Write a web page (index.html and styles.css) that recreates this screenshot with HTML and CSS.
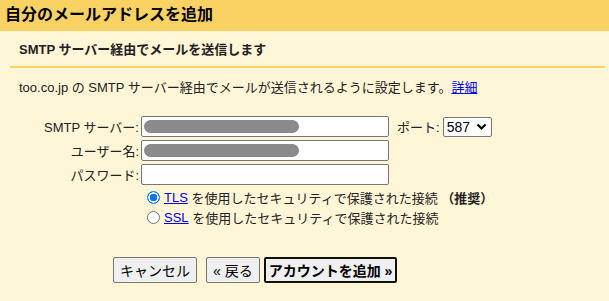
FILE: index.html
```html
<!DOCTYPE html>
<html lang="ja">
<head>
    <meta charset="UTF-8">
    <title>自分のメールアドレスを追加</title>
    <link rel="stylesheet" href="styles.css">
</head>
<body>
    <div class="title">自分のメールアドレスを追加</div>
    <div class="content">
        <div class="subhead">SMTP サーバー経由でメールを送信します</div>
        <p class="desc">too.co.jp の SMTP サーバー経由でメールが送信されるように設定します。<a href="#">詳細</a></p>

        <div class="form">
            <label class="lbl">SMTP サーバー:</label>
            <div class="row">
                <div class="field"><span class="redact"></span></div>
                <span class="port">ポート:</span>
                <div class="select">587 <svg width="11" height="8" viewBox="0 0 11 8"><path d="M1.5 1.5 L5.5 5.5 L9.5 1.5" fill="none" stroke="#000" stroke-width="2.2"/></svg></div>
            </div>
            <label class="lbl">ユーザー名:</label>
            <div class="row"><div class="field"><span class="redact"></span></div></div>
            <label class="lbl">パスワード:</label>
            <div class="row"><div class="field"></div></div>
        </div>

        <div class="radios">
            <div class="radio-row"><span class="radio checked"></span><a href="#">TLS</a> を使用したセキュリティで保護された接続 <b>（推奨）</b></div>
            <div class="radio-row"><span class="radio"></span><a href="#">SSL</a> を使用したセキュリティで保護された接続</div>
        </div>

        <div class="buttons">
            <button class="btn">キャンセル</button>
            <button class="btn back">« 戻る</button>
            <button class="btn primary">アカウントを追加 »</button>
        </div>
    </div>
</body>
</html>
```

FILE: styles.css
```css
body {
    margin: 0;
    background-color: #fff5d7;
    color: #222;
    font-family: "Liberation Sans", Arial, "Noto Sans CJK JP", sans-serif;
    font-size: 13px;
}
.title {
    background-color: #f9d263;
    height: 31px;
    line-height: 30px;
    padding-left: 5px;
    font-size: 16px;
    font-weight: bold;
    color: #000;
}
.content {
    padding: 0 4px 0 10px;
}
.subhead {
    font-weight: bold;
    padding: 8px 0 0 9px;
    height: 27px;
    border-bottom: 2px solid #f9d263;
}
.desc {
    margin: 11px 0 0 9px;
    line-height: 17px;
}
a {
    color: #0000ee;
}
.form {
    display: grid;
    grid-template-columns: 131px auto;
    row-gap: 3px;
    margin-top: 20px;
    align-items: center;
}
.lbl {
    text-align: right;
    padding-right: 2px;
    font-size: 13px;
}
.row {
    display: flex;
    align-items: center;
}
.field {
    width: 244px;
    height: 19px;
    border: 1px solid #767676;
    border-radius: 2px;
    background: #fff;
    display: flex;
    align-items: center;
    padding-left: 2px;
}
.redact {
    width: 155px;
    height: 13px;
    border-radius: 7px;
    background: #8a8a8a;
}
.port {
    margin-left: 8px;
    margin-right: 3px;
}
.select {
    display: flex;
    align-items: center;
    gap: 6px;
    height: 18px;
    border: 1px solid #767676;
    border-radius: 2px;
    background: #fff;
    padding: 0 4px 0 3px;
    font-size: 14px;
    color: #000;
}
.radios {
    margin: 2px 0 0 127px;
}
.radio-row {
    display: flex;
    align-items: center;
    height: 20px;
    white-space: pre;
}
.radio {
    width: 11px;
    height: 11px;
    border: 1px solid #767676;
    border-radius: 50%;
    background: #fff;
    margin: 0 4px 0 10px;
    box-sizing: content-box;
}
.radio.checked {
    border-color: #0075ff;
    background: radial-gradient(circle, #0075ff 0 3.5px, #fff 4px 5px, #0075ff 5.5px);
}
.radio-row b {
    font-weight: bold;
}
.buttons {
    display: flex;
    margin: 30px 0 0 103px;
}
.btn {
    font-family: "Liberation Sans", Arial, "Noto Sans CJK JP", sans-serif;
    font-size: 14px;
    height: 26px;
    padding: 0 6px;
    background: #efefef;
    color: #000;
    border: 1px solid #767676;
    border-radius: 2px;
    margin-right: 9px;
}
.btn.back {
    margin-right: 4px;
}
.btn.primary {
    border: 2px solid #101010;
    font-weight: bold;
    padding: 0 3px;
}
```
